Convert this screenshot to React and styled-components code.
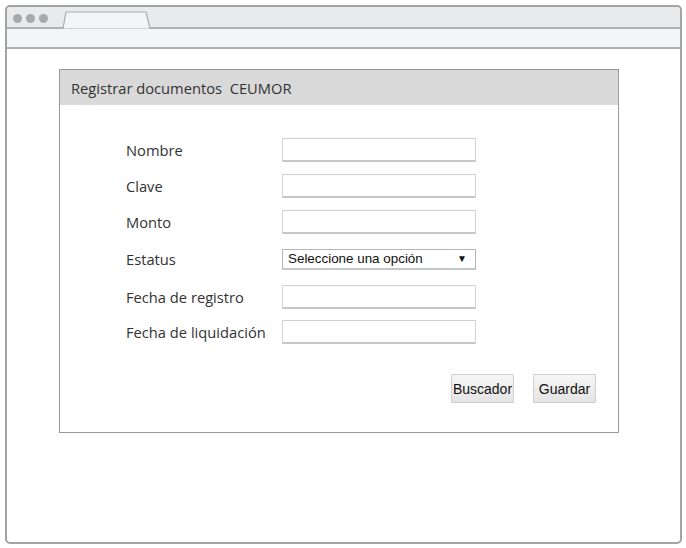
import React from "react";
import styled, { createGlobalStyle } from "styled-components";

const Global = createGlobalStyle`
  html, body { margin: 0; padding: 0; background: #fff; }
  body { font-family: "Open Sans", sans-serif; }
  * { box-sizing: border-box; }
`;

const Page = styled.div`
  width: 686px;
  height: 548px;
  padding: 5px 4px 4px 5px;
`;

const Frame = styled.div`
  height: 100%;
  border: 2px solid #a3a3a3;
  border-radius: 5px;
  display: flex;
  flex-direction: column;
  overflow: hidden;
  background: #fff;
`;

const TopBar = styled.div`
  height: 22px;
  background: #e9eaeb;
  border-bottom: 2px solid #b0b0b0;
  display: flex;
  align-items: flex-end;
  padding-left: 6px;
`;

const Dots = styled.div`
  display: flex;
  gap: 4px;
  align-self: center;
  margin-top: 2px;
`;

const Dot = styled.span`
  width: 9px;
  height: 9px;
  border-radius: 50%;
  background: #a9a9a9;
`;

const Tab = styled.svg`
  margin-left: 14px;
  margin-bottom: -2px;
  display: block;
`;

const AddressBar = styled.div`
  height: 20px;
  background: #f4f5f6;
  border-bottom: 2px solid #b0b0b0;
`;

const Content = styled.div`
  flex: 1;
  padding: 20px 0 0 52px;
`;

const Panel = styled.div`
  width: 560px;
  height: 364px;
  border: 1px solid #999;
  display: flex;
  flex-direction: column;
`;

const PanelHeader = styled.div`
  height: 35px;
  background: #d9d9d9;
  padding: 0 11px;
  display: flex;
  align-items: center;
  font-size: 14.7px;
  color: #333;
  white-space: pre;
`;

const Form = styled.div`
  padding: 33px 22px 0 66px;
  display: flex;
  flex-direction: column;
`;

const Row = styled.div`
  display: grid;
  grid-template-columns: 156px 194px;
  align-items: center;
  height: ${(p) => p.h || 24}px;
  margin-top: ${(p) => p.gap || 0}px;
`;

const Label = styled.div`
  font-size: 14.7px;
  color: #333;
  line-height: 20px;
`;

const Input = styled.div`
  height: 24px;
  background: #fff;
  border: 1px solid #d4d4d4;
  border-top-color: #cfcfcf;
  border-bottom: 2px solid #c4c6c8;
  border-radius: 1px;
`;

const Select = styled.div`
  height: 21px;
  border: 1px solid #b5b5b5;
  border-bottom: 2px solid #c4c6c8;
  display: flex;
  align-items: center;
  justify-content: space-between;
  padding: 0 8px 0 5px;
  font-family: "Liberation Sans", Arial, sans-serif;
  font-size: 13.4px;
  color: #111;
`;

const Arrow = styled.span`
  font-size: 10px;
  color: #111;
`;

const Buttons = styled.div`
  display: flex;
  justify-content: flex-end;
  gap: 19px;
  margin-top: 30px;
`;

const Button = styled.button`
  width: 63px;
  height: 29px;
  padding: 0;
  border: 1px solid #cfcfcf;
  border-radius: 1px;
  background: linear-gradient(#f6f6f6, #e4e4e4);
  font-family: "Liberation Sans", Arial, sans-serif;
  font-size: 14px;
  color: #111;
`;

export default function App() {
  return (
    <>
      <Global />
      <Page>
        <Frame>
          <TopBar>
            <Dots>
              <Dot />
              <Dot />
              <Dot />
            </Dots>
            <Tab width="90" height="18" viewBox="0 0 90 18">
              <path d="M1 17.5 L4 1 L84 1 L88 17.5" fill="#f4f5f6" stroke="#aaa" strokeWidth="1.2" />
            </Tab>
          </TopBar>
          <AddressBar />
          <Content>
            <Panel>
              <PanelHeader>Registrar documentos  CEUMOR</PanelHeader>
              <Form>
                <Row>
                  <Label>Nombre</Label>
                  <Input />
                </Row>
                <Row gap={12}>
                  <Label>Clave</Label>
                  <Input />
                </Row>
                <Row gap={12}>
                  <Label>Monto</Label>
                  <Input />
                </Row>
                <Row gap={14} h={22}>
                  <Label>Estatus</Label>
                  <Select>
                    <span>Seleccione una opción</span>
                    <Arrow>▼</Arrow>
                  </Select>
                </Row>
                <Row gap={15}>
                  <Label>Fecha de registro</Label>
                  <Input />
                </Row>
                <Row gap={11}>
                  <Label>Fecha de liquidación</Label>
                  <Input />
                </Row>
                <Buttons>
                  <Button>Buscador</Button>
                  <Button>Guardar</Button>
                </Buttons>
              </Form>
            </Panel>
          </Content>
        </Frame>
      </Page>
    </>
  );
}
